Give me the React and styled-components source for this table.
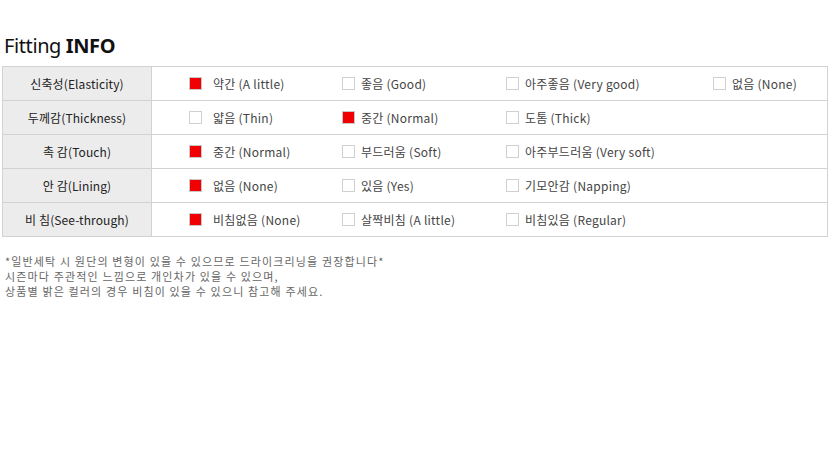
import styled, { createGlobalStyle } from "styled-components";

const GlobalStyle = createGlobalStyle`
  body {
    margin: 0;
    background: #fff;
    font-family: "Noto Sans CJK KR", "DejaVu Sans", sans-serif;
    color: #333;
  }
`;

const Wrapper = styled.div`
  padding: 33px 4px 0 2px;
  width: 826px;
`;

const Title = styled.h2`
  margin: 0 0 8px 2px;
  font-family: "Noto Sans", "Open Sans", sans-serif;
  font-size: 20px;
  font-weight: 400;
  line-height: 25px;
  color: #111;
  letter-spacing: -0.4px;

  b {
    font-weight: 700;
  }
`;

const Table = styled.div`
  border: 1px solid #d2d2d2;
  border-bottom: none;
`;

const Row = styled.div`
  display: grid;
  grid-template-columns: 149px 1fr;
  height: 33px;
  border-bottom: 1px solid #d2d2d2;
`;

const Label = styled.div`
  background: #ececec;
  border-right: 1px solid #d2d2d2;
  display: flex;
  align-items: center;
  justify-content: center;
  font-size: 12px;
  color: #222;
  letter-spacing: 0.1px;
`;

const Options = styled.div`
  display: grid;
  grid-template-columns: 153px 164px 207px auto;
  align-items: center;
  padding-left: 37px;
`;

const Option = styled.div`
  display: flex;
  align-items: center;
  gap: ${(p) => (p.first ? "11px" : "6px")};
  font-size: 12px;
  color: #444;
  white-space: nowrap;
  letter-spacing: 0.25px;
`;

const Box = styled.span`
  display: inline-block;
  flex: none;
  width: 11px;
  height: 11px;
  border: 1px solid ${(p) => (p.checked ? "#c8c8c8" : "#d0d0d0")};
  background: ${(p) => (p.checked ? "#f00000" : "#fff")};
`;

const Note = styled.p`
  margin: 17px 0 0 3px;
  font-size: 11px;
  line-height: 15px;
  color: #666;
  letter-spacing: 1.15px;
`;

const rows = [
  {
    label: "신축성(Elasticity)",
    options: ["약간 (A little)", "좋음 (Good)", "아주좋음 (Very good)", "없음 (None)"],
    checked: 0,
  },
  {
    label: "두께감(Thickness)",
    options: ["얇음 (Thin)", "중간 (Normal)", "도톰 (Thick)"],
    checked: 1,
  },
  {
    label: "촉 감(Touch)",
    options: ["중간 (Normal)", "부드러움 (Soft)", "아주부드러움 (Very soft)"],
    checked: 0,
  },
  {
    label: "안 감(Lining)",
    options: ["없음 (None)", "있음 (Yes)", "기모안감 (Napping)"],
    checked: 0,
  },
  {
    label: "비 침(See-through)",
    options: ["비침없음 (None)", "살짝비침 (A little)", "비침있음 (Regular)"],
    checked: 0,
  },
];

const App = () => {
  return (
    <Wrapper>
      <GlobalStyle />
      <Title>
        Fitting <b>INFO</b>
      </Title>
      <Table>
        {rows.map((row) => (
          <Row key={row.label}>
            <Label>{row.label}</Label>
            <Options>
              {row.options.map((opt, i) => (
                <Option key={opt} first={i === 0}>
                  <Box checked={i === row.checked} />
                  {opt}
                </Option>
              ))}
            </Options>
          </Row>
        ))}
      </Table>
      <Note>
        *일반세탁 시 원단의 변형이 있을 수 있으므로 드라이크리닝을 권장합니다*
        <br />
        시즌마다 주관적인 느낌으로 개인차가 있을 수 있으며,
        <br />
        상품별 밝은 컬러의 경우 비침이 있을 수 있으니 참고해 주세요.
      </Note>
    </Wrapper>
  );
};

export default App;
